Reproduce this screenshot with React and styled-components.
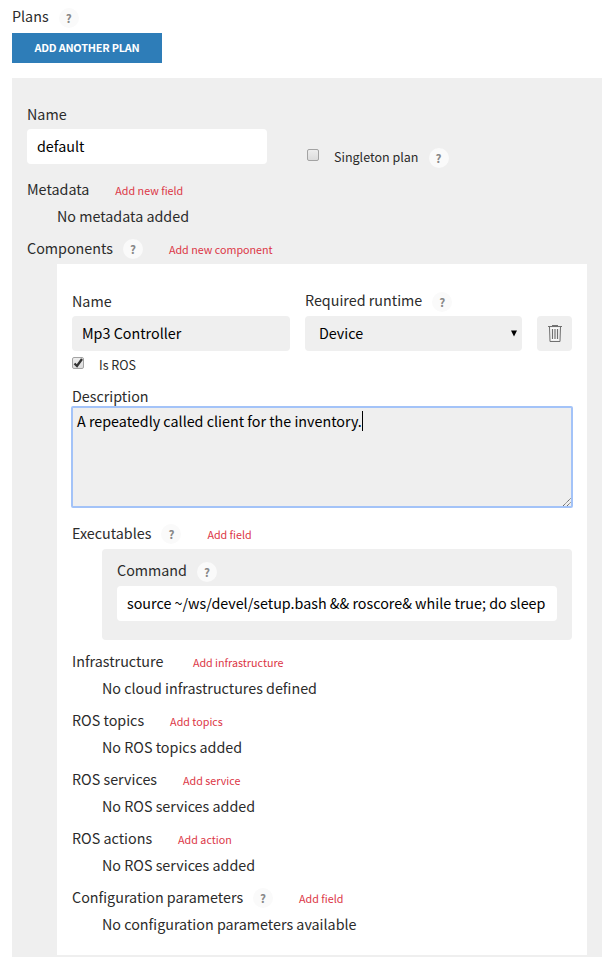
import React from "react";
import styled, { createGlobalStyle } from "styled-components";

const GlobalStyle = createGlobalStyle`
  *, *::before, *::after { box-sizing: border-box; }
  html, body { margin: 0; height: 957px; overflow: hidden; background: #fff; }
  body, input, button {
    font-family: "Noto Sans CJK SC", "Noto Sans", sans-serif;
    font-size: 14.32px;
    color: #2b2b2b;
  }
`;

const Page = styled.main`
  width: 610px;
  height: 957px;
  padding: 3px 8px 0 12px;
  overflow: hidden;
`;

const TitleRow = styled.div`
  display: flex;
  align-items: center;
  height: ${(p) => p.$height || 28}px;
  margin-top: ${(p) => p.$top || 0}px;
  margin-bottom: ${(p) => p.$bottom || 0}px;
`;

const Label = styled.span`
  padding-bottom: 2px;
  line-height: 22px;
  white-space: nowrap;
`;

const Help = styled.span`
  flex: none;
  display: flex;
  align-items: center;
  justify-content: center;
  width: 20px;
  height: 20px;
  margin: 2px 0 0 10px;
  border-radius: 50%;
  background: #fafafa;
  color: #888;
  font-size: 11.6px;
  font-weight: 700;
  line-height: 20px;
  &:not(:last-child) { margin-top: 0; }
`;

const AddLink = styled.a`
  margin: 2px 0 0 ${(p) => p.$gap || 26}px;
  color: #dc3545;
  font-size: 10.74px;
  line-height: 20px;
  white-space: nowrap;
`;

const PrimaryButton = styled.button`
  display: block;
  width: 150px;
  height: 30px;
  margin-top: 2px;
  padding: 0 0 2px;
  border: 0;
  background: #2e7db8;
  color: #fff;
  font-size: 10.9px;
  font-weight: 700;
  letter-spacing: -0.22px;
  line-height: 28px;
`;

const PlanPanel = styled.section`
  height: 879px;
  margin-top: 15px;
  padding: 23px 15px 0;
  background: #efefef;
`;

const FieldRow = styled.div`
  display: flex;
  align-items: flex-start;
`;

const Field = styled.div`
  width: ${(p) => p.$width}px;
  margin-right: ${(p) => p.$gap || 0}px;
`;

const TextInput = styled.input`
  display: block;
  width: 100%;
  height: 35px;
  padding: 0 10px 2px;
  border: 0;
  border-radius: 4px;
  outline: 0;
  background: ${(p) => (p.$shaded ? "#efefef" : "#fff")};
  color: #000;
`;

const CheckLine = styled.label`
  display: flex;
  align-items: center;
  height: 20px;
  margin-top: ${(p) => p.$top}px;
`;

const CheckText = styled.span`
  font-size: 12.53px;
  line-height: 20px;
`;

const CheckBox = styled.span`
  flex: none;
  width: 12px;
  height: 12px;
  margin: -4px 15px 0 0;
  border: 1px solid #a3a3a3;
  border-radius: 2px;
  background: linear-gradient(#ededed, #dcdcdc);
  svg { display: block; overflow: visible; }
`;

const EmptyText = styled.p`
  height: 26px;
  margin: 0 0 5px 30px;
  line-height: 24px;
  white-space: nowrap;
`;

const ComponentCard = styled.section`
  width: 530px;
  height: 691px;
  margin-left: 30px;
  padding: 23px 15px 0;
  background: #fff;
`;

const SelectBox = styled.div`
  display: flex;
  align-items: center;
  justify-content: space-between;
  height: 35px;
  padding: 0 4px 2px 14px;
  border-radius: 4px;
  background: #efefef;
  color: #000;
`;

const TrashButton = styled.button`
  display: flex;
  align-items: center;
  justify-content: center;
  width: 35px;
  height: 35px;
  margin: 29px 0 0 15px;
  padding: 0;
  border: 0;
  border-radius: 4px;
  background: #efefef;
`;

const Editor = styled.div`
  position: relative;
  width: 502px;
  height: 102px;
  margin: -5px 0 0 -1px;
  padding: 2px 4px;
  border: 2px solid #a3c3f8;
  border-radius: 2px;
  background: #efefef;
  color: #000;
  display: flex;
  align-items: flex-start;
  line-height: 22px;
  white-space: nowrap;
`;

const Caret = styled.span`
  width: 1px;
  height: 20px;
  margin-top: 1px;
  background: #000;
`;

const Grip = styled.svg`
  position: absolute;
  right: 0;
  bottom: 0;
`;

const CommandBox = styled.div`
  height: 91px;
  margin: 1px 0 8px 30px;
  padding: 8px 15px 0;
  border-radius: 4px;
  background: #efefef;
`;

function Heading({ label, help, link, gap, height, top, bottom }) {
  return (
    <TitleRow $height={height} $top={top} $bottom={bottom}>
      <Label>{label}</Label>
      {help && <Help>?</Help>}
      {link && <AddLink $gap={gap}>{link}</AddLink>}
    </TitleRow>
  );
}

const sections = [
  { label: "Infrastructure", link: "Add infrastructure", gap: 29.5, empty: "No cloud infrastructures defined" },
  { label: "ROS topics", link: "Add topics", empty: "No ROS topics added" },
  { label: "ROS services", link: "Add service", empty: "No ROS services added" },
  { label: "ROS actions", link: "Add action", empty: "No ROS services added" },
  { label: "Configuration parameters", link: "Add field", help: true, empty: "No configuration parameters available" },
];

export default function App() {
  return (
    <>
      <GlobalStyle />
      <Page>
        <TitleRow>
          <Label>Plans</Label>
          <Help>?</Help>
        </TitleRow>
        <PrimaryButton>ADD ANOTHER PLAN</PrimaryButton>
        <PlanPanel>
          <FieldRow>
            <Field $width={240} $gap={40}>
              <Heading label="Name" height={27} bottom={1} />
              <TextInput defaultValue="default" />
            </Field>
            <CheckLine $top={46}>
              <CheckBox />
              <CheckText>Singleton plan</CheckText>
              <Help>?</Help>
            </CheckLine>
          </FieldRow>
          <Heading label="Metadata" link="Add new field" top={9} />
          <EmptyText>No metadata added</EmptyText>
          <Heading label="Components" help link="Add new component" top={-1} height={30} />
          <ComponentCard>
            <FieldRow>
              <Field $width={218} $gap={15}>
                <Heading label="Name" height={29} />
                <TextInput $shaded defaultValue="Mp3 Controller" />
              </Field>
              <Field $width={217}>
                <Heading label="Required runtime" help height={28} bottom={1} />
                <SelectBox>
                  Device
                  <svg width="8" height="8" viewBox="0 0 8 8">
                    <path d="M1 1.5h6L4 7.5z" fill="#000" />
                  </svg>
                </SelectBox>
              </Field>
              <TrashButton aria-label="Delete component">
                <svg width="15" height="19" viewBox="0 0 15 19" fill="none" stroke="#707070">
                  <path d="M3.5 4h8v12h-8z" fill="#fafafa" stroke="none" />
                  <path d="M1 2.5h14M5 1.5h6M2.5 3l.5 14.5h10L13.5 3" />
                  <path d="M5.5 5v10M8 5v10M10.5 5v10" strokeWidth="1.2" />
                </svg>
              </TrashButton>
            </FieldRow>
            <CheckLine $top={4}>
              <CheckBox>
                <svg width="10" height="10" viewBox="0 0 10 10">
                  <path d="M1.5 5.5L4 8l5-7" fill="none" stroke="#333" strokeWidth="2.3" />
                </svg>
              </CheckBox>
              <CheckText>Is ROS</CheckText>
            </CheckLine>
            <Heading label="Description" top={8} />
            <Editor>
              A repeatedly called client for the inventory.
              <Caret />
              <Grip width="8" height="8" viewBox="0 0 8 8">
                <path d="M0 8L8 0M4 8l4-4" stroke="#555" strokeDasharray="1.2 .6" />
              </Grip>
            </Editor>
            <Heading label="Executables" help link="Add field" top={12} />
            <CommandBox>
              <Heading label="Command" help height={28} bottom={1} />
              <TextInput defaultValue="source ~/ws/devel/setup.bash && roscore& while true; do sleep" />
            </CommandBox>
            {sections.map(({ empty, ...heading }) => (
              <React.Fragment key={heading.label}>
                <Heading {...heading} />
                <EmptyText>{empty}</EmptyText>
              </React.Fragment>
            ))}
          </ComponentCard>
        </PlanPanel>
      </Page>
    </>
  );
}
